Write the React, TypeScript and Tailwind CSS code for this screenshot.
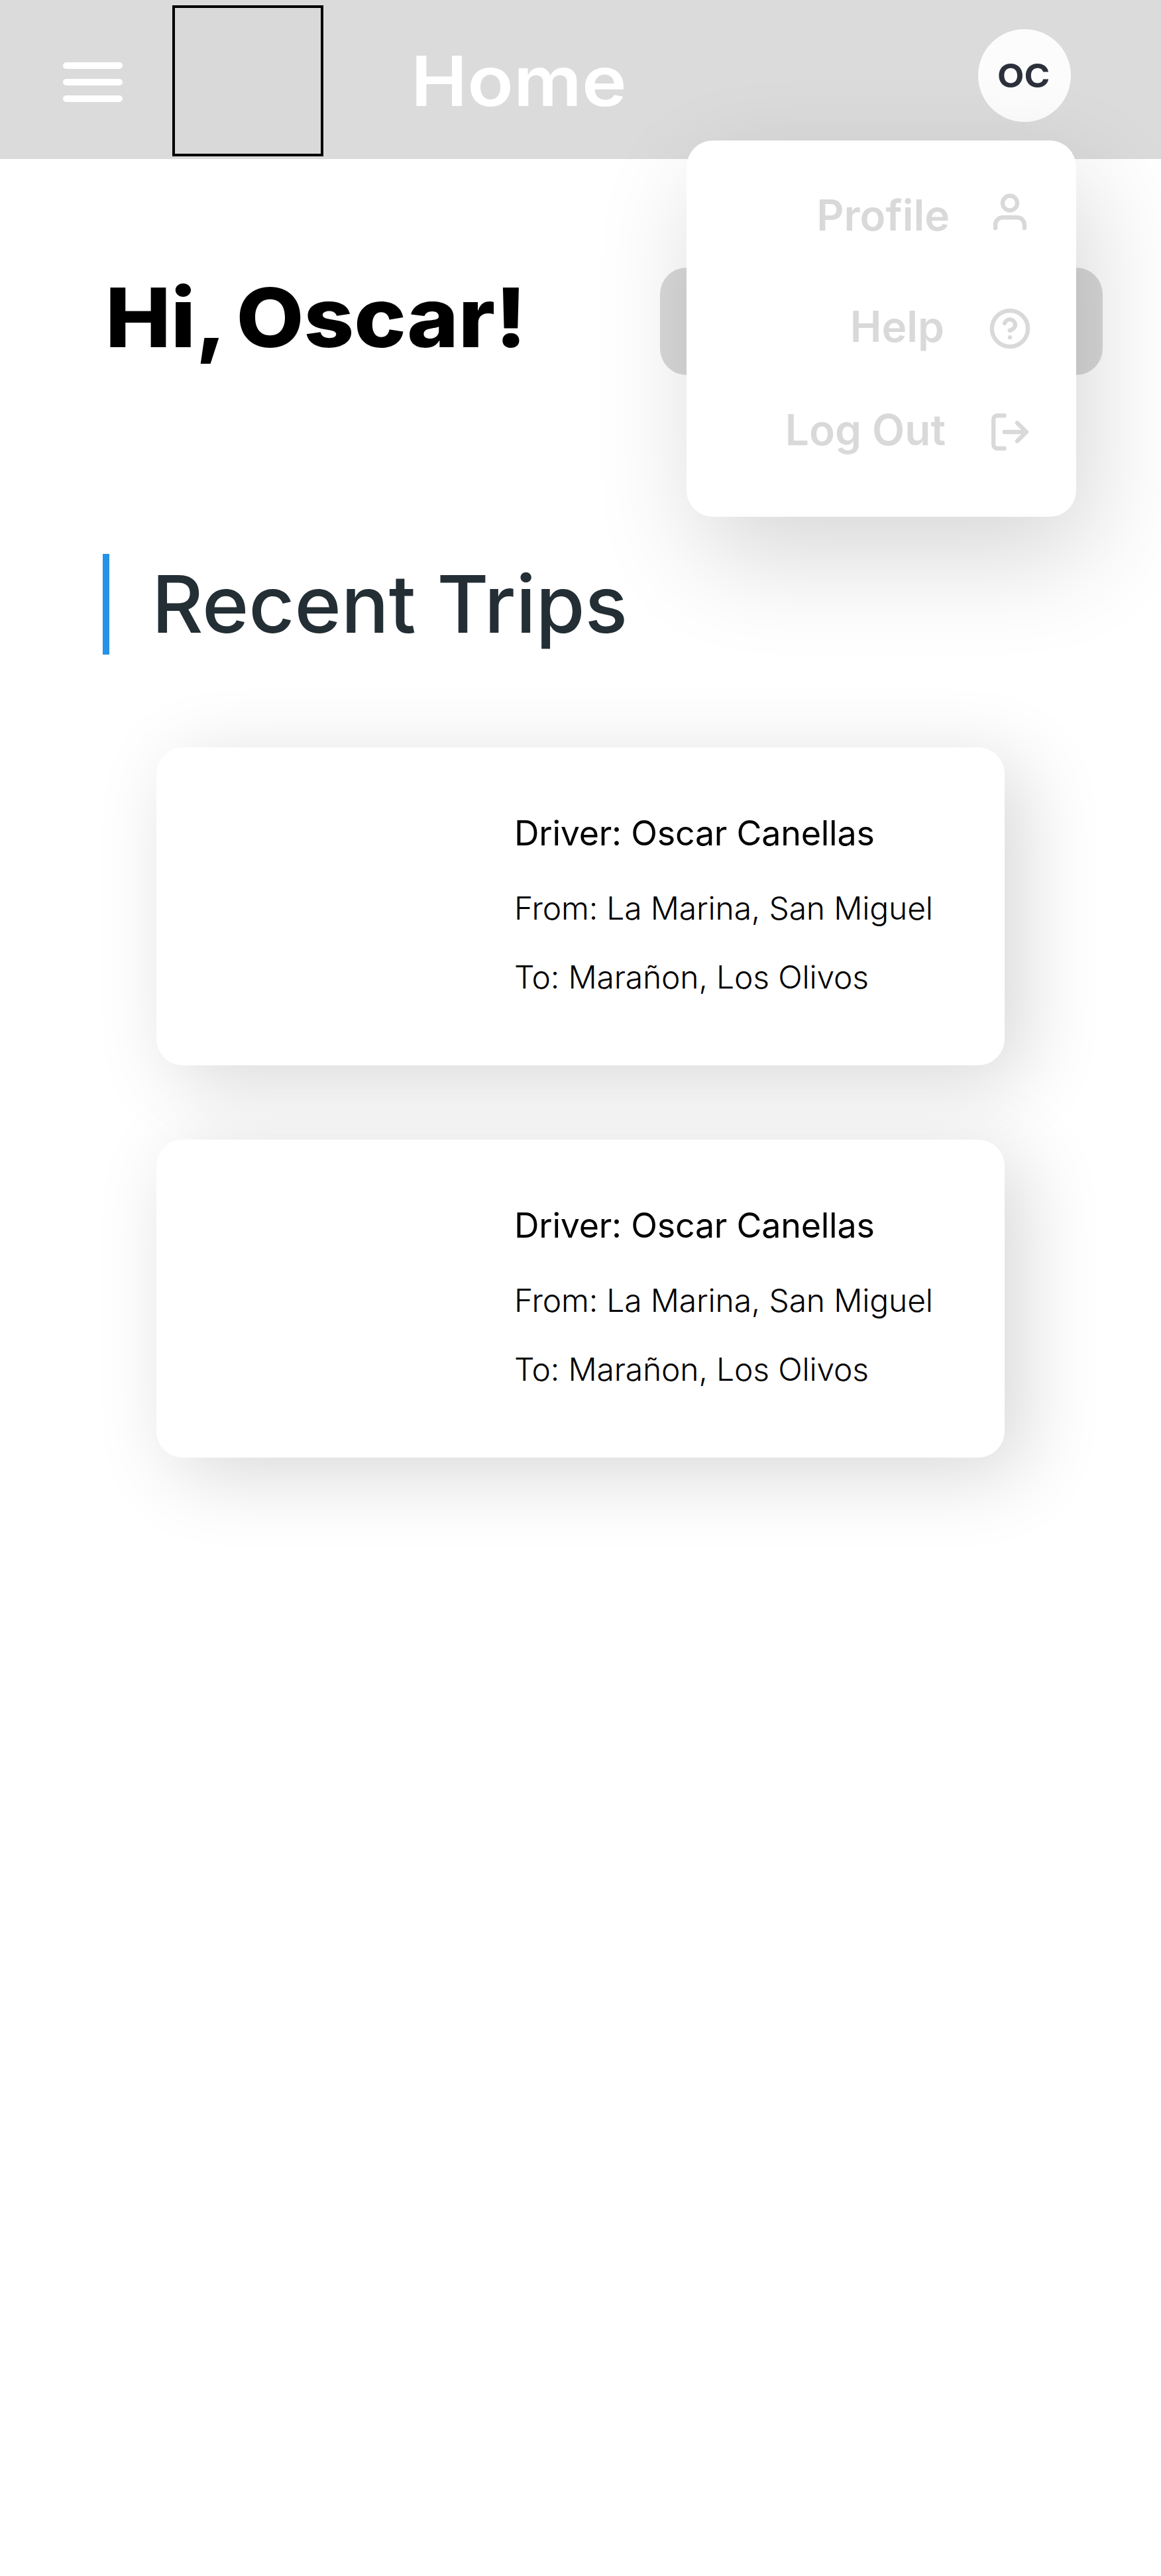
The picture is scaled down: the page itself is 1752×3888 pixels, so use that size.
import React from "react";

const rows = [
  { label: "Profile", icon: "user", row: "mt-[74px] gap-[58px]", iconOffset: "mt-px" },
  { label: "Help", icon: "help", row: "mt-[90px] gap-[66px]", iconOffset: "mt-[9px]" },
  { label: "Log Out", icon: "logout", row: "mt-[78px] gap-[64px]", iconOffset: "mt-[9px]" },
];

function Icon({ name }: { name: string }) {
  return (
    <svg viewBox="0 0 24 24" className="size-[66px] shrink-0 overflow-visible" fill="none" stroke="#d9d9d9" strokeWidth="2.3" strokeLinecap="round" strokeLinejoin="round">
      {name === "user" && (
        <>
          <path d="M20 20.8V19a4 4 0 0 0-4-4H8a4 4 0 0 0-4 4v1.8" />
          <circle cx="12" cy="7.1" r="4" />
        </>
      )}
      {name === "help" && (
        <>
          <circle cx="12" cy="12" r="9.85" />
          <path d="M9.09 9a3 3 0 0 1 5.83 1c0 2-3 3-3 3" />
          <path d="M12 16.8h.01" />
        </>
      )}
      {name === "logout" && (
        <>
          <path d="M9 21H5a2 2 0 0 1-2-2V5a2 2 0 0 1 2-2h4" />
          <path d="M16 17l5-5-5-5" />
          <path d="M21 12H9" />
        </>
      )}
    </svg>
  );
}

function TripCard() {
  return (
    <article className="flex h-[480px] w-[1280px] flex-col rounded-[40px] bg-white pl-[540px] text-black shadow-[28px_24px_120px_rgba(0,0,0,0.155)]">
      <h3 className="mt-[98px] text-[52px] leading-[64px] tracking-[-0.25px] whitespace-nowrap">Driver: Oscar Canellas</h3>
      <p className="mt-[52px] text-[48px] leading-[58px] font-light tracking-[-0.18px] whitespace-nowrap">From: La Marina, San Miguel</p>
      <p className="mt-[46px] text-[48px] leading-[58px] font-light tracking-[-0.18px] whitespace-nowrap">To: Marañon, Los Olivos</p>
    </article>
  );
}

export default function App() {
  return (
    <div className="relative h-[3888px] w-[1752px] overflow-hidden bg-white font-['Inter',sans-serif]">
      <header className="flex h-[240px] items-start bg-[#dbdbdb]">
        <button className="mt-[94px] ml-[95px] flex w-[90px] flex-col gap-[15px]">
          <span className="h-[10px] rounded-full bg-white" />
          <span className="h-[10px] rounded-full bg-white" />
          <span className="h-[10px] rounded-full bg-white" />
        </button>
        <div className="mt-[8px] ml-[75px] size-[228px] border-4 border-black bg-[#d9d9d9]" />
        <h1 className="mt-[58px] ml-[132px] w-[400px] origin-left scale-x-[1.09] text-[105px] leading-[128px] font-semibold text-white">Home</h1>
        <div className="mt-[44px] mr-[136px] ml-auto flex size-[140px] items-center justify-center rounded-full bg-[#fcfcfc] text-[#2b303b]">
          <span className="-ml-[3px] scale-x-[1.05] text-[50px] leading-[60px] font-bold">OC</span>
        </div>
      </header>
      <main>
        <section className="flex h-[596px] items-start justify-between pt-[164px] pr-[88px] pl-[159px]">
          <h2 className="origin-left scale-x-[1.065] text-[124px] leading-[150px] font-extrabold whitespace-nowrap text-black [word-spacing:-8px]">Hi, Oscar!</h2>
          <div className="h-[162px] w-[668px] rounded-[40px] bg-[#d9d9d9]" />
        </section>
        <h2 className="ml-[155px] flex h-[152px] items-center border-l-[10px] border-[#2492e6] pl-[64px] text-[120px] leading-[152px] font-medium tracking-[-0.15px] text-[#232e35]">Recent Trips</h2>
        <section className="mt-[140px] ml-[236px] flex flex-col gap-[112px]">
          <TripCard />
          <TripCard />
        </section>
      </main>
      <nav className="absolute top-[212px] left-[1036px] flex h-[568px] w-[588px] flex-col rounded-[40px] bg-white pr-[67px] text-[64px] leading-[78px] font-semibold text-[#d9d9d9] shadow-[20px_60px_160px_rgba(0,0,0,0.16)]">
        {rows.map((r) => (
          <a key={r.label} className={`flex h-[78px] items-start justify-end ${r.row}`}>
            <span className="whitespace-nowrap">{r.label}</span>
            <span className={r.iconOffset}>
              <Icon name={r.icon} />
            </span>
          </a>
        ))}
      </nav>
    </div>
  );
}
